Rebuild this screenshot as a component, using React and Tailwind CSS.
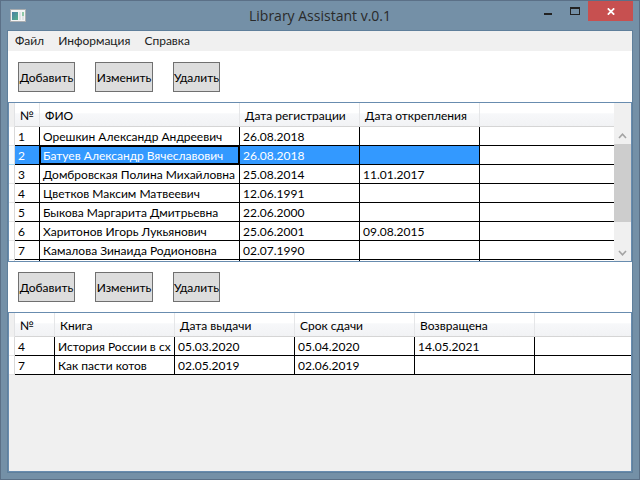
const readers = [
  ["1", "Орешкин Александр Андреевич", "26.08.2018", ""],
  ["2", "Батуев Александр Вячеславович", "26.08.2018", ""],
  ["3", "Домбровская Полина Михайловна", "25.08.2014", "11.01.2017"],
  ["4", "Цветков Максим Матвеевич", "12.06.1991", ""],
  ["5", "Быкова Маргарита Дмитрьевна", "22.06.2000", ""],
  ["6", "Харитонов Игорь Лукьянович", "25.06.2001", "09.08.2015"],
  ["7", "Камалова Зинаида Родионовна", "02.07.1990", ""],
  ["", "", "", ""],
];

const loans = [
  ["4", "История России в сх", "05.03.2020", "05.04.2020", "14.05.2021"],
  ["7", "Как пасти котов", "02.05.2019", "02.06.2019", ""],
];

function TitleBar() {
  return (
    <header className="grid h-[29px] shrink-0 grid-cols-[1fr_auto_1fr] items-start">
      <svg className="mt-2 ml-[9px]" width="16" height="13" viewBox="0 0 16 13" aria-hidden="true">
        <defs>
          <linearGradient id="pane" x1="0" y1="0" x2="1" y2="1">
            <stop offset="0" stopColor="#4a7fa5" />
            <stop offset="1" stopColor="#56b08a" />
          </linearGradient>
        </defs>
        <rect x="0.5" y="0.5" width="15" height="12" fill="#f4f4f4" stroke="#a9adb0" />
        <rect x="2" y="3" width="6" height="8" fill="url(#pane)" />
        <rect x="9" y="3" width="2" height="8" fill="#dfe3e6" />
        <rect x="12" y="3" width="2" height="4" fill="#8fc9a8" />
        <rect x="12" y="7" width="2" height="4" fill="#dfe3e6" />
      </svg>
      <h1 className="pt-1 font-['Open_Sans','Noto_Sans',sans-serif] text-[14px] leading-[22px] text-[#2a2a2a]">Library Assistant v.0.1</h1>
      <div className="flex justify-end pr-[6px]">
        <button aria-label="Свернуть" className="flex h-5 w-[27px] items-center justify-center">
          <svg width="8" height="12" viewBox="0 0 8 12"><rect y="8" width="8" height="2" fill="#222" /></svg>
        </button>
        <button aria-label="Развернуть" className="flex h-5 w-[27px] items-center justify-center">
          <svg width="10" height="8" viewBox="0 0 10 8"><path d="M0 0H10V8H0ZM1 2V7H9V2Z" fill="#222" fillRule="evenodd" /></svg>
        </button>
        <button aria-label="Закрыть" className="flex h-5 w-[45px] items-center justify-center bg-[#c75050]">
          <svg width="8" height="7" viewBox="0 0 8 7"><path d="M0.8 0.3L7.2 6.7M7.2 0.3L0.8 6.7" stroke="#fff" strokeWidth="1.7" /></svg>
        </button>
      </div>
    </header>
  );
}

function Toolbar({ className }) {
  const button = "h-[30px] border border-[#707070] bg-[#dddddd] pt-[2px] text-center whitespace-nowrap";
  return (
    <div className={"flex shrink-0 pl-[10px] " + className}>
      <button className={button + " w-[57px]"}>Добавить</button>
      <button className={button + " ml-5 w-[58px]"}>Изменить</button>
      <button className={button + " ml-5 w-[47px]"}>Удалить</button>
    </div>
  );
}

function DataGrid({ label, widths, headings, rows, selected }) {
  return (
    <table aria-label={label} className="w-full table-fixed border-separate border-spacing-0 text-left">
      <colgroup>
        <col className="w-[6px]" />
        {widths.map((width, i) => <col key={i} className={width} />)}
        <col />
      </colgroup>
      <thead>
        <tr className="h-6 bg-linear-to-b from-white from-40% via-[#f7f8fa] via-45% to-[#f1f2f4]">
          <td className="border-r border-[#e2e3e5] bg-[#f0f0f0] p-0" />
          {headings.map((heading) => (
            <th key={heading} scope="col" className="border-r border-b border-r-[#e5e6e8] border-b-[#d5d5d5] pt-[2px] pr-0 pb-0 pl-[5px] font-normal whitespace-nowrap">
              {heading}
            </th>
          ))}
          <td className="border-b border-[#d5d5d5] p-0" />
        </tr>
      </thead>
      <tbody>
        {rows.map((row, r) => {
          const active = r === selected;
          return (
            <tr key={r} className="h-[19px] bg-white">
              <td className={"border-r border-b p-0 " + (active ? "border-r-[#dcdcdc] border-b-[#a5d8f0] bg-[#f4fbff]" : "border-r-[#d9d9d9] border-b-[#e6e6e6]")} />
              {row.map((cell, c) => (
                <td
                  key={c}
                  className={
                    "overflow-hidden border-r border-b border-black pt-[2px] pr-0 pb-0 pl-[3px] leading-4 whitespace-nowrap " +
                    (active ? "bg-[#3399ff] text-white " : "") +
                    (active && c === 1 ? "shadow-[inset_0_0_0_1px_#000]" : "")
                  }
                >
                  {cell}
                </td>
              ))}
              <td className="border-b border-black p-0" />
            </tr>
          );
        })}
      </tbody>
    </table>
  );
}

function ScrollBar() {
  return (
    <div className="flex w-[17px] shrink-0 flex-col bg-[#f0f0f0] pt-6">
      <button aria-label="Прокрутить вверх" className="flex h-[17px] shrink-0 items-center justify-center">
        <svg width="9" height="6" viewBox="0 0 9 6"><path d="M1 5L4.5 1.2L8 5" fill="none" stroke="#a3a3a3" strokeWidth="1.6" /></svg>
      </button>
      <div className="h-[78px] bg-[#cdcdcd]" />
      <button aria-label="Прокрутить вниз" className="mt-auto flex h-[17px] shrink-0 items-center justify-center">
        <svg width="9" height="6" viewBox="0 0 9 6"><path d="M1 1L4.5 4.8L8 1" fill="none" stroke="#a3a3a3" strokeWidth="1.6" /></svg>
      </button>
    </div>
  );
}

export default function App() {
  return (
    <div className="flex min-h-screen flex-col border border-[#5b7087] bg-[#7490a7] font-[Lato,'Noto_Sans',sans-serif] text-[12px] leading-4 text-black">
      <TitleBar />
      <main className="mx-[6px] mb-[6px] flex flex-1 flex-col border border-[#5f7f9b] bg-white">
        <nav className="flex h-5 shrink-0 items-center gap-[14px] bg-[#f0f0f0] pl-[7px] text-[#212121]">
          <button>Файл</button>
          <button>Информация</button>
          <button>Справка</button>
        </nav>
        <Toolbar className="pt-[11px] pb-[10px]" />
        <section className="flex h-40 shrink-0 overflow-hidden border border-[#688caf]">
          <div className="min-w-0 flex-1 overflow-hidden bg-white">
            <DataGrid
              label="Читатели"
              widths={["w-[25px]", "w-[200px]", "w-[120px]", "w-[120px]"]}
              headings={["№", "ФИО", "Дата регистрации", "Дата открепления"]}
              rows={readers}
              selected={1}
            />
          </div>
          <ScrollBar />
        </section>
        <Toolbar className="py-[10px]" />
        <section className="flex-1 border border-[#688caf] bg-[#f0f0f0]">
          <DataGrid
            label="Выданные книги"
            widths={["w-10", "w-[120px]", "w-[120px]", "w-[120px]", "w-[120px]"]}
            headings={["№", "Книга", "Дата выдачи", "Срок сдачи", "Возвращена"]}
            rows={loans}
            selected={-1}
          />
        </section>
      </main>
    </div>
  );
}
